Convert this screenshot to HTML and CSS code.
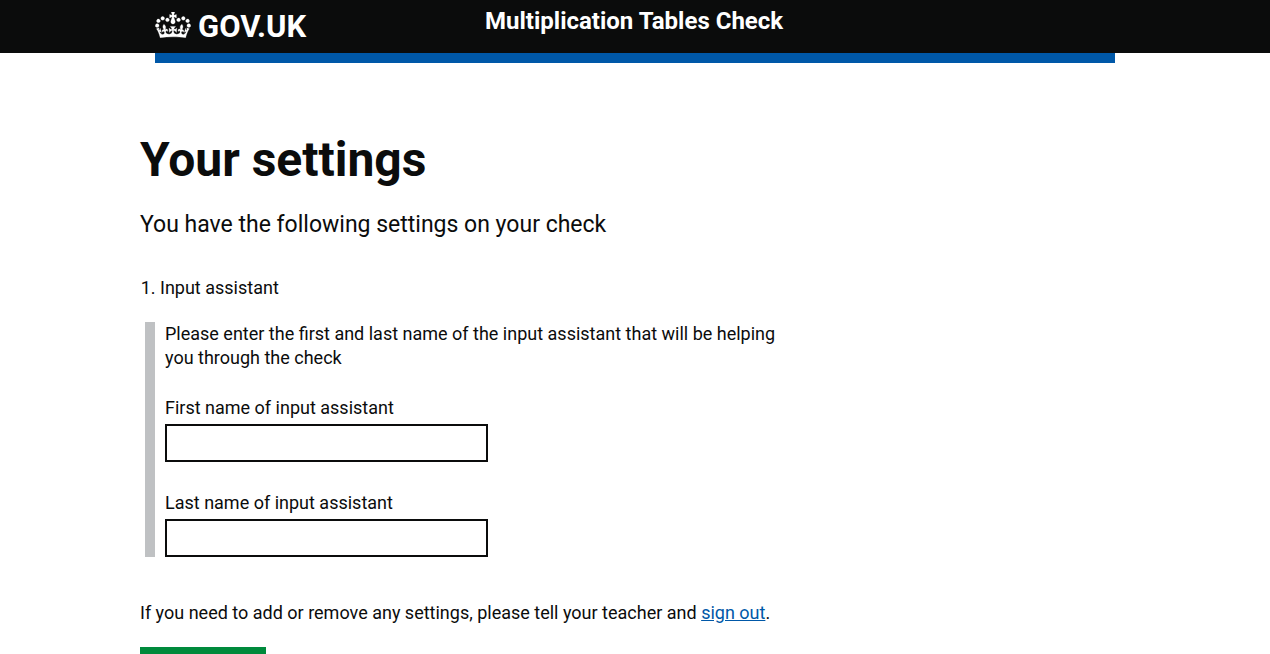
FILE: index.html
```html
<!DOCTYPE html>
<html lang="en">
<head>
<meta charset="utf-8">
<title>Multiplication Tables Check</title>
<link rel="stylesheet" href="styles.css">
</head>
<body>
<header class="header">
  <div class="header-inner">
    <a class="logo" href="#">
      <svg class="crown" viewBox="0 0 132 97" aria-hidden="true"><path fill="currentColor" fill-rule="evenodd" stroke="currentColor" stroke-width="1" d="M25 30.2c3.5 1.5 7.7-.2 9.1-3.7 1.5-3.6-.2-7.8-3.9-9.2-3.6-1.4-7.6.3-9.1 3.9-1.4 3.5.3 7.5 3.9 9zM9 39.5c3.6 1.5 7.8-.2 9.2-3.7 1.5-3.6-.2-7.8-3.9-9.1-3.6-1.5-7.6.2-9.1 3.8-1.4 3.5.3 7.5 3.8 9zM4.4 57.2c3.5 1.5 7.7-.2 9.1-3.8 1.5-3.6-.2-7.7-3.9-9.1-3.5-1.5-7.6.3-9.1 3.8-1.4 3.5.3 7.6 3.9 9.1zm38.3-21.4c3.5 1.5 7.7-.2 9.1-3.8 1.5-3.6-.2-7.7-3.9-9.1-3.6-1.5-7.6.3-9.1 3.8-1.3 3.6.4 7.7 3.9 9.1zm64.4-5.6c-3.6 1.5-7.8-.2-9.1-3.7-1.5-3.6.2-7.8 3.8-9.2 3.6-1.4 7.7.3 9.2 3.9 1.3 3.5-.4 7.5-3.9 9zm15.9 9.3c-3.6 1.5-7.7-.2-9.1-3.7-1.5-3.6.2-7.8 3.7-9.1 3.6-1.5 7.7.2 9.2 3.8 1.5 3.5-.3 7.5-3.8 9zm4.7 17.7c-3.6 1.5-7.8-.2-9.2-3.8-1.5-3.6.2-7.7 3.9-9.1 3.6-1.5 7.7.3 9.2 3.8 1.3 3.5-.4 7.6-3.9 9.1zM89.3 35.8c-3.6 1.5-7.8-.2-9.2-3.8-1.4-3.6.2-7.7 3.9-9.1 3.6-1.5 7.7.3 9.2 3.8 1.4 3.6-.3 7.7-3.9 9.1zM69.7 17.7l8.9 4.7V9.3l-8.9 2.8c-.2-.3-.5-.6-.9-.9L72.4 0H59.6l3.5 11.2c-.3.3-.6.5-.9.9l-8.8-2.8v13.1l8.8-4.7c.3.3.6.7.9.9l-5 15.4v.1c-.2.8-.4 1.6-.4 2.4 0 4.1 3.1 7.5 7 8.1h.2c.3 0 .7.1 1 .1.4 0 .7 0 1-.1h.2c4-.6 7.1-4.1 7.1-8.1 0-.8-.1-1.7-.4-2.4V34l-5.1-15.4c.4-.2.7-.6 1-.9zM66 92.8c16.9 0 32.8 1.1 47.1 3.2 4-16.9 8.9-26.7 14-33.5l-9.6-3.4c1 4.9 1.1 7.2 0 10.2-1.5-1.4-3-4.3-4.2-8.7L108.6 76c2.8-2 5-3.2 7.5-3.3-4.4 9.4-10 11.9-13.6 11.2-4.3-.8-6.3-4.6-5.6-7.9 1-4.7 5.7-5.9 8-.5 4.3-8.7-3-11.4-7.6-8.8 7.1-7.2 7.9-13.5 2.1-21.1-8 6.1-8.1 12.3-4.5 20.8-4.7-5.4-12.1-2.5-9.5 6.2 3.4-5.2 7.9-2 7.2 3.1-.6 4.3-6.4 7.8-13.5 7.2-10.3-.9-10.9-8-11.2-13.8 2.5-.5 7.1 1.8 11 7.3L80.2 60c-4.1 4.4-8 5.3-12.3 5.4 1.4-4.4 8-11.6 8-11.6H55.5s6.4 7.2 7.9 11.6c-4.2-.1-8-1-12.3-5.4l1.4 16.4c3.9-5.5 8.5-7.7 10.9-7.3-.3 5.8-.9 12.8-11.1 13.8-7.2.6-12.9-2.9-13.5-7.2-.7-5 3.8-8.3 7.1-3.1 2.7-8.7-4.6-11.6-9.4-6.2 3.7-8.5 3.6-14.7-4.6-20.8-5.8 7.6-5 13.9 2.2 21.1-4.7-2.6-11.9.1-7.7 8.8 2.3-5.5 7.1-4.2 8.1.5.7 3.3-1.3 7.1-5.7 7.9-3.5.7-9-1.8-13.5-11.2 2.5.1 4.7 1.3 7.5 3.3l-4.7-15.4c-1.2 4.4-2.7 7.2-4.3 8.7-1.1-3-.9-5.3 0-10.2l-9.5 3.4c5 6.9 9.9 16.7 14 33.5 14.8-2.1 30.8-3.2 47.7-3.2z"/></svg>
      <span>GOV.UK</span>
    </a>
    <a class="service" href="#">Multiplication Tables Check</a>
  </div>
</header>
<div class="bar"></div>
<main class="content">
  <form class="column">
    <h1 class="title">Your settings</h1>
    <p class="lede">You have the following settings on your check</p>
    <ol class="settings">
      <li>Input assistant</li>
    </ol>
    <div class="panel">
      <p class="panel-text">Please enter the first and last name of the input assistant that will be helping you through the check</p>
      <div class="field">
        <label for="first-name">First name of input assistant</label>
        <input id="first-name" type="text">
      </div>
      <div class="field">
        <label for="last-name">Last name of input assistant</label>
        <input id="last-name" type="text">
      </div>
    </div>
    <p class="note">If you need to add or remove any settings, please tell your teacher and <a class="link" href="#">sign out</a>.</p>
    <button class="button" type="submit" aria-label="Next"></button>
  </form>
</main>
</body>
</html>
```
FILE: styles.css
```css
* {
  box-sizing: border-box;
}

body {
  margin: 0;
  background: #fff;
  color: #0b0c0c;
  font-family: Roboto, sans-serif;
  font-size: 18px;
  line-height: 24px;
}

.header {
  background: #0b0c0c;
}

.header-inner {
  display: grid;
  grid-template-columns: 330px 1fr;
  align-items: start;
  max-width: 960px;
  height: 53px;
  margin: 0 auto;
}

.header a {
  color: #fff;
  text-decoration: none;
}

.logo {
  display: flex;
  align-items: flex-start;
  gap: 7px;
  padding-top: 12px;
  font-size: 31px;
  font-weight: 700;
  line-height: 30px;
}

.crown {
  width: 36px;
  height: 26px;
}

.service {
  padding-top: 6px;
  font-size: 24px;
  font-weight: 700;
  line-height: 30px;
}

.bar {
  max-width: 960px;
  height: 10px;
  margin: 0 auto;
  background: #0058a8;
}

.content {
  max-width: 990px;
  margin: 0 auto;
  padding-top: 72px;
}

.column {
  max-width: 671px;
}

.title {
  margin: 0;
  font-size: 48px;
  font-weight: 700;
  line-height: 50px;
}

.lede {
  margin: 25px 0 0;
  font-size: 23px;
  line-height: 30px;
}

.settings {
  margin: 36px 0 0;
  padding-left: 20px;
}

.panel {
  margin: 22px 0 0 5px;
  padding-left: 10px;
  border-left: 10px solid #bfc1c3;
}

.panel-text {
  max-width: 630px;
  margin: 0;
}

.field {
  padding-top: 26px;
}

.field + .field {
  padding-top: 29px;
}

.field label {
  display: block;
  padding-bottom: 4px;
}

.field input {
  display: block;
  width: 50%;
  height: 38px;
  padding: 5px;
  border: 2px solid #0b0c0c;
  border-radius: 0;
  background: #fff;
  font: inherit;
}

.note {
  margin: 44px 0 22px;
}

.link {
  color: #0058a8;
}

.button {
  display: block;
  min-width: 126px;
  min-height: 7px;
  padding: 0;
  border: 0;
  background: #008a3c;
  color: #fff;
  font: inherit;
}
```
